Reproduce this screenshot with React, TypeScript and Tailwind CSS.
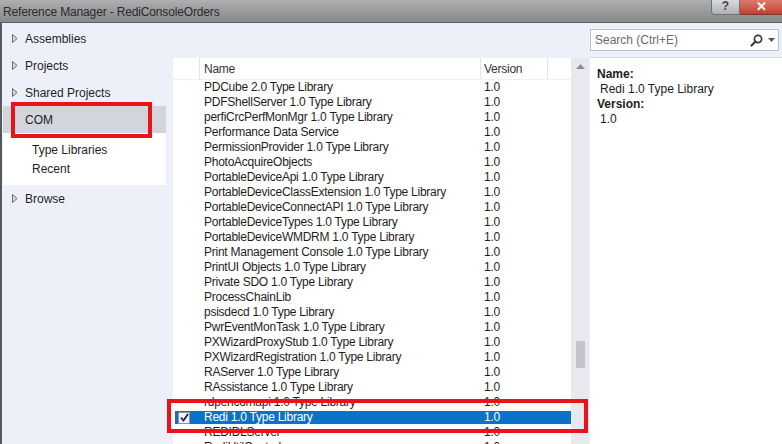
import React from "react";

const rows = [
  "PDCube 2.0 Type Library",
  "PDFShellServer 1.0 Type Library",
  "perfiCrcPerfMonMgr 1.0 Type Library",
  "Performance Data Service",
  "PermissionProvider 1.0 Type Library",
  "PhotoAcquireObjects",
  "PortableDeviceApi 1.0 Type Library",
  "PortableDeviceClassExtension 1.0 Type Library",
  "PortableDeviceConnectAPI 1.0 Type Library",
  "PortableDeviceTypes 1.0 Type Library",
  "PortableDeviceWMDRM 1.0 Type Library",
  "Print Management Console 1.0 Type Library",
  "PrintUI Objects 1.0 Type Library",
  "Private SDO 1.0 Type Library",
  "ProcessChainLib",
  "psisdecd 1.0 Type Library",
  "PwrEventMonTask 1.0 Type Library",
  "PXWizardProxyStub 1.0 Type Library",
  "PXWizardRegistration 1.0 Type Library",
  "RAServer 1.0 Type Library",
  "RAssistance 1.0 Type Library",
  "rdpencomapi 1.0 Type Library",
  "Redi 1.0 Type Library",
  "REDIDLServer",
  "RediUtilControl",
];

function Arrow() {
  return (
    <svg width="6" height="9" viewBox="0 0 6 9" className="mr-[7px]">
      <path d="M0.5 0.5 L5 4.5 L0.5 8.5 Z" fill="#d8d8d8" stroke="#6a6a6a" strokeWidth="1" />
    </svg>
  );
}

function NavItem({ label }: { label: string }) {
  return (
    <div className="flex items-center h-[27px] pl-[9px]">
      <Arrow />
      <span>{label}</span>
    </div>
  );
}

function Checkbox() {
  return (
    <div className="w-[12px] h-[12px] border border-[#8e8f94] bg-[#f2f2f4] flex items-center justify-center">
      <svg width="9" height="9" viewBox="0 0 9 9">
        <path d="M1 4.5 L3.5 7.5 L8 1" fill="none" stroke="#1c1a6b" strokeWidth="1.8" />
      </svg>
    </div>
  );
}

export default function App() {
  return (
    <div className="relative w-[782px] h-[444px] overflow-hidden bg-[#eef0f9] font-['Liberation_Sans',sans-serif] text-[12px] text-[#1e1e1e]">
      {/* title bar */}
      <div className="flex items-start h-[23px] bg-gradient-to-b from-[#adafb0] via-[#989a9c] to-[#878a8c] border-b border-[#5d5f62]">
        <div className="pl-[3px] pt-[3px] text-[#2a2a2a] tracking-[-0.15px]">Reference Manager - RediConsoleOrders</div>
        <div className="ml-auto flex">
          <div className="w-[29px] h-[15px] rounded-bl-[4px] border border-t-0 border-[#6f7275] bg-gradient-to-b from-[#d9dbdd] to-[#aeb1b4] text-[12px] leading-[13px] text-center font-bold text-[#444]">
            ?
          </div>
          <div className="w-[42px] h-[15px] border-b border-[#7a3a32] bg-gradient-to-b from-[#dd7a6c] to-[#c2402f] text-white text-[13px] leading-[13px] text-center font-bold">
            ✕
          </div>
        </div>
      </div>

      <div className="flex h-[421px]">
        {/* left pane */}
        <div className="w-[170px] border-l-2 border-[#55585c] pl-[1px] pr-[4px] pt-[2px]">
          <NavItem label="Assemblies" />
          <NavItem label="Projects" />
          <NavItem label="Shared Projects" />
          <div className="flex items-center h-[27px] pl-[22px] bg-[#d3d5dc]">COM</div>
          <div className="bg-white pt-[8px] pb-[6px] pl-[29px]">
            <div className="h-[19px] leading-[19px]">Type Libraries</div>
            <div className="h-[19px] leading-[19px]">Recent</div>
          </div>
          <NavItem label="Browse" />
        </div>

        {/* center list */}
        <div className="w-[419px] pt-[35px] pl-[3px] flex">
          <div className="w-[398px] bg-white overflow-hidden tracking-[-0.25px]">
            <div className="flex h-[22px] items-center text-[#333] border-b border-[#eef0f4]">
              <div className="w-[27px] h-full border-r border-[#e0e3ea]" />
              <div className="w-[281px] pl-[4px] h-full flex items-center border-r border-[#e0e3ea]">Name</div>
              <div className="w-[67px] pl-[3px] h-full flex items-center border-r border-[#e0e3ea]">Version</div>
            </div>
            {rows.map((r) => {
              const sel = r === "Redi 1.0 Type Library";
              return (
                <div
                  key={r}
                  className={
                    sel
                      ? "flex h-[15px] py-[1px] leading-[13px] ml-[2px] bg-[#0b72c8] bg-clip-content text-white"
                      : "flex h-[15px] leading-[15px] ml-[2px]"
                  }
                >
                  <div className="w-[25px] pl-[3px] flex items-center">{sel ? <Checkbox /> : null}</div>
                  <div className="w-[281px] pl-[4px] whitespace-nowrap">{r}</div>
                  <div className="pl-[3px]">1.0</div>
                </div>
              );
            })}
          </div>
          <div className="w-[18px] bg-[#e8e9ef] flex flex-col items-center">
            <div className="h-[17px] flex items-center">
              <svg width="9" height="5" viewBox="0 0 9 5">
                <path d="M0 5 L4.5 0 L9 5 Z" fill="#8c8d92" />
              </svg>
            </div>
            <div className="mt-[266px] w-[9px] h-[27px] bg-[#c3c4c9]" />
          </div>
        </div>

        {/* right pane */}
        <div className="flex-1 flex flex-col pt-[6px] pl-[1px]">
          <div className="flex items-center h-[22px] w-[189px] bg-white border border-[#b9c0d0] pl-[4px] pr-[3px] text-[#6b6b6b]">
            <span>Search (Ctrl+E)</span>
            <svg width="13" height="13" viewBox="0 0 13 13" className="ml-auto">
              <circle cx="8" cy="5" r="3.6" fill="none" stroke="#3c3c3c" strokeWidth="1.7" />
              <path d="M5.5 7.5 L1.5 11.5" stroke="#3c3c3c" strokeWidth="2.2" strokeLinecap="round" />
            </svg>
            <svg width="7" height="4" viewBox="0 0 7 4" className="ml-[5px]">
              <path d="M0 0 L7 0 L3.5 4 Z" fill="#555" />
            </svg>
          </div>
          <div className="mt-[6px] flex-1 bg-white border-t border-[#d6d9e2] pl-[7px] pt-[9px] leading-[15px]">
            <div className="font-bold">Name:</div>
            <div className="pl-[3px]">Redi 1.0 Type Library</div>
            <div className="font-bold">Version:</div>
            <div className="pl-[3px]">1.0</div>
          </div>
        </div>
      </div>

      {/* red annotation boxes */}
      <div className="absolute left-[11px] top-[102px] w-[141px] h-[36px] border-4 border-[#e8131b]" />
      <div className="absolute left-[167px] top-[399px] w-[421px] h-[34px] border-4 border-[#e8131b]" />
    </div>
  );
}
